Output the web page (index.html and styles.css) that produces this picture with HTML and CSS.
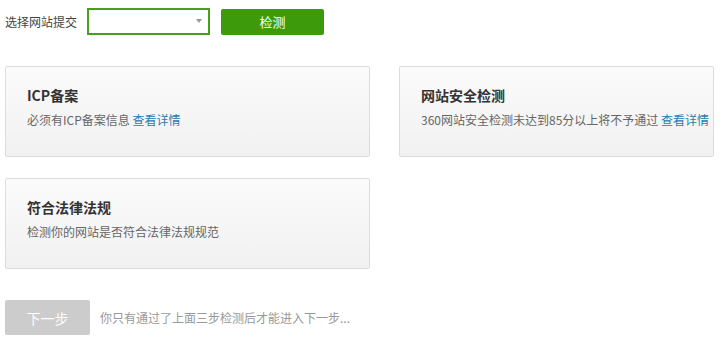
FILE: index.html
```html
<!DOCTYPE html>
<html lang="zh-CN">
<head>
  <meta charset="UTF-8" />
  <title>网站提交检测</title>
  <link rel="stylesheet" href="styles.css">
</head>
<body>
  <div class="check-bar">
    <label for="site">选择网站提交</label>
    <div class="select-box">
      <select id="site"></select>
      <span class="arrow"></span>
    </div>
    <button class="check-btn">检测</button>
  </div>

  <div class="rules">
    <div class="rule-card">
      <h3>ICP备案</h3>
      <p>必须有ICP备案信息 <a href="#">查看详情</a></p>
    </div>
    <div class="rule-card wide">
      <h3>网站安全检测</h3>
      <p>360网站安全检测未达到85分以上将不予通过 <a href="#">查看详情</a></p>
    </div>
    <div class="rule-card">
      <h3>符合法律法规</h3>
      <p>检测你的网站是否符合法律法规规范</p>
    </div>
  </div>

  <div class="next-row">
    <button class="next-btn" disabled>下一步</button>
    <span class="tip">你只有通过了上面三步检测后才能进入下一步...</span>
  </div>
</body>
</html>
```

FILE: styles.css
```css
body {
  margin: 0;
  padding: 8px 0 0 5px;
  font-family: "Noto Sans CJK SC", "Liberation Sans", sans-serif;
  font-size: 12px;
  color: #333;
  background: #fff;
  overflow: hidden;
}

.check-bar {
  display: flex;
  align-items: center;
  height: 27px;
}

.check-bar label {
  width: 82px;
  color: #444;
}

.select-box {
  position: relative;
  width: 123px;
  height: 27px;
  box-sizing: border-box;
  border: 2px solid #48a01a;
  background: #fff;
}

.select-box select {
  width: 100%;
  height: 100%;
  border: none;
  background: transparent;
  appearance: none;
  -webkit-appearance: none;
}

.arrow {
  position: absolute;
  right: 6px;
  top: 9px;
  border-left: 3px solid transparent;
  border-right: 3px solid transparent;
  border-top: 4px solid #999;
}

.check-btn {
  margin-left: 11px;
  width: 103px;
  height: 26px;
  border: none;
  border-radius: 2px;
  background: #3d9b0b;
  color: #fff;
  font-family: inherit;
  font-size: 13px;
}

.rules {
  display: flex;
  flex-wrap: wrap;
  column-gap: 29px;
  row-gap: 21px;
  margin-top: 31px;
  width: 710px;
}

.rule-card {
  width: 365px;
  height: 91px;
  box-sizing: border-box;
  padding: 17px 21px 0;
  border: 1px solid #dcdcdc;
  border-radius: 2px;
  background: linear-gradient(#fbfbfb, #f1f1f1);
}

.rule-card.wide {
  width: 315px;
  padding-right: 0;
  white-space: nowrap;
}

.rule-card h3 {
  margin: 0;
  font-size: 14px;
  line-height: 22px;
  font-weight: bold;
  color: #333;
}

.rule-card p {
  margin: 4px 0 0;
  line-height: 20px;
  color: #666;
}

.rule-card a {
  color: #1f7cb4;
  text-decoration: none;
}

.next-row {
  display: flex;
  align-items: center;
  margin-top: 31px;
}

.next-btn {
  width: 85px;
  height: 35px;
  border: none;
  border-radius: 2px;
  background: #cccccc;
  color: #fff;
  font-family: inherit;
  font-size: 14px;
}

.tip {
  margin-left: 10px;
  color: #999;
}
```
